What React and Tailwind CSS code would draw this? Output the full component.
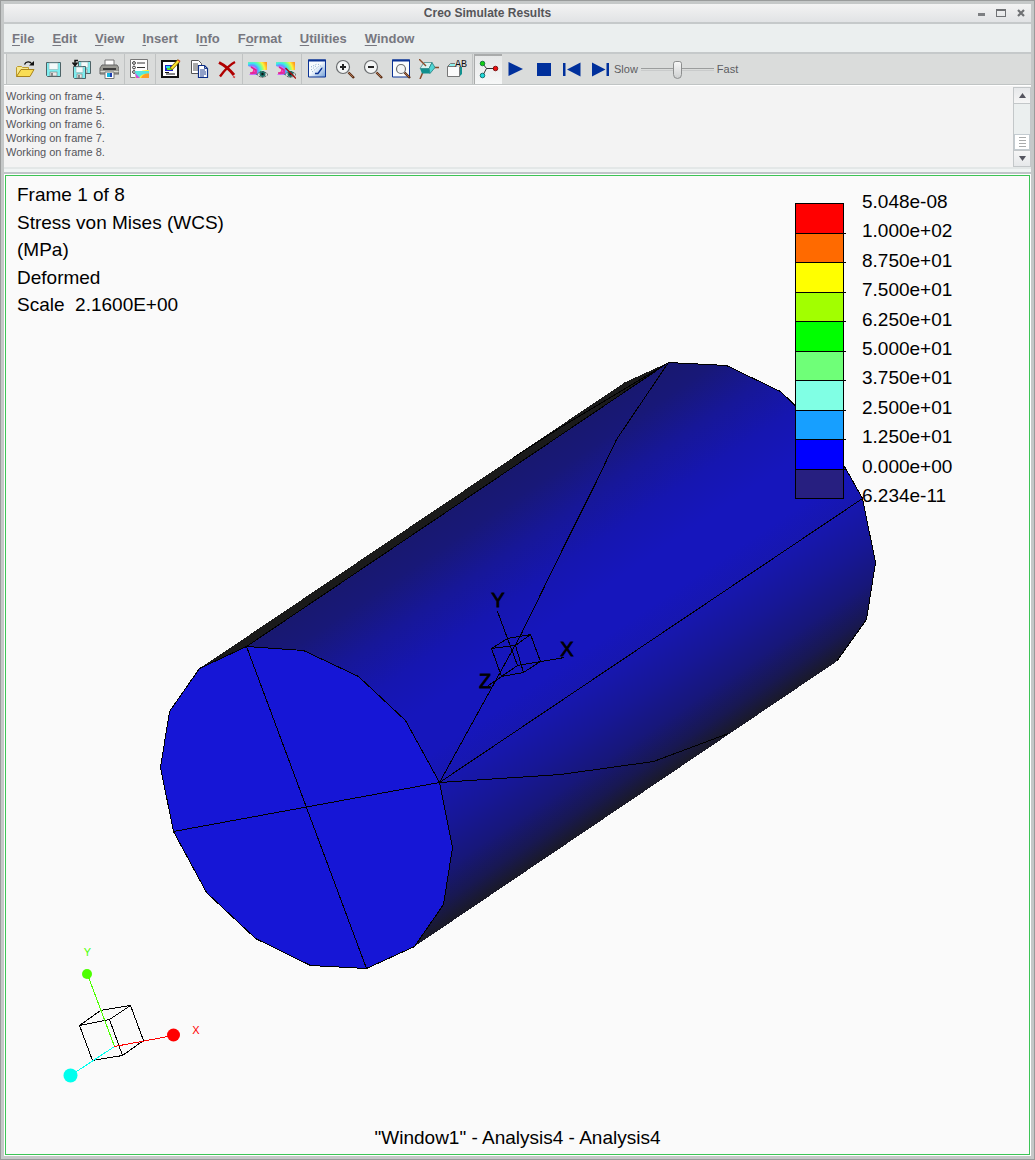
import React, { useState } from 'react';

const MENUS = [
  ['', 'F', 'ile'],
  ['', 'E', 'dit'],
  ['', 'V', 'iew'],
  ['', 'I', 'nsert'],
  ['I', 'n', 'fo'],
  ['F', 'o', 'rmat'],
  ['', 'U', 'tilities'],
  ['', 'W', 'indow'],
];

const LOG_LINES = [
  'Working on frame 4.',
  'Working on frame 5.',
  'Working on frame 6.',
  'Working on frame 7.',
  'Working on frame 8.',
];

const INFO_LINES = [
  'Frame 1 of 8',
  'Stress von Mises (WCS)',
  '(MPa)',
  'Deformed',
  'Scale  2.1600E+00',
];

const LEGEND_COLORS = [
  'bg-[#ff0000]',
  'bg-[#ff6a00]',
  'bg-[#ffff00]',
  'bg-[#a2ff00]',
  'bg-[#00ff00]',
  'bg-[#6fff78]',
  'bg-[#80ffe4]',
  'bg-[#179fff]',
  'bg-[#0000ff]',
  'bg-[#271f80]',
];

const LEGEND_LABELS = [
  '5.048e-08',
  '1.000e+02',
  '8.750e+01',
  '7.500e+01',
  '6.250e+01',
  '5.000e+01',
  '3.750e+01',
  '2.500e+01',
  '1.250e+01',
  '0.000e+00',
  '6.234e-11',
];

function Icon({ children }) {
  return (
    <svg width="20" height="20" viewBox="0 0 20 20" fill="none" aria-hidden="true">
      {children}
    </svg>
  );
}

function Floppy({ x, y, s = 15 }) {
  return (
    <g transform={`translate(${x} ${y})`}>
      <path d={`M.5.5h${s - 1}v${s - 1}h-${s - 2}l-1-1z`} fill="#7feef0" stroke="#4d6266" />
      <rect x="3" y="1" width={s - 6} height={s / 2 - 1} fill="#f4fafa" stroke="#8fb3b5" strokeWidth=".6" />
      <rect x="4" y={s - 5} width={s - 8} height="4" fill="#e8e8e8" stroke="#777" strokeWidth=".6" />
      <rect x="5" y={s - 4} width="2" height="3" fill="#888" />
    </g>
  );
}

// colour fringe used by the show and hide icons
function Fringe({ id }) {
  return (
    <>
      <defs>
        <radialGradient id={id} gradientUnits="userSpaceOnUse" cx="4" cy="12" r="16">
          <stop offset="0.1" stopColor="#ff2aa0" />
          <stop offset="0.25" stopColor="#d070ff" />
          <stop offset="0.36" stopColor="#6a90ff" />
          <stop offset="0.48" stopColor="#38e8f0" />
          <stop offset="0.64" stopColor="#7dff90" />
          <stop offset="0.8" stopColor="#fff23a" />
          <stop offset="1" stopColor="#ff9b20" />
        </radialGradient>
      </defs>
      <path d="M0 3H19V11H14L10 16H1L5 12V9L0 7Z" fill={`url(#${id})`} />
      <path d="M2 14h5M3 8l5 3v4" stroke="#e0208c" strokeWidth="1.5" />
    </>
  );
}

function Eye() {
  return (
    <>
      <path d="M9 15.500Q14 9.500 20 15.500Q14 21 9 15.500Z" fill="#dfe6e4" stroke="#444" strokeDasharray="2 1" />
      <circle cx="14.500" cy="15" r="3" fill="#1c6f68" />
      <circle cx="14.500" cy="15" r="1.200" fill="#0a1515" />
    </>
  );
}

function Lens({ cx, cy, r }) {
  return (
    <>
      <path d={`M${cx + r - 1} ${cy + r - 1}L19 19`} stroke="#5b2f17" strokeWidth="2.400" />
      <path d={`M${cx + r - 1} ${cy + r - 1}L18 18`} stroke="#c08055" strokeWidth=".8" />
      <circle cx={cx} cy={cy} r={r} fill="#f3f5f5" stroke="#6a6d6f" strokeWidth="1.200" />
    </>
  );
}

const TOOL_GROUPS = [
  [
    {
      name: 'Open',
      icon: (
        <>
          <path d="M1.500 17.500V8.500l1-1h4l1 1h6v3" fill="#f7e98e" stroke="#bd9a2c" />
          <path d="M1.500 17.500L6 10.500H19L15 17.500Z" fill="#f9dd55" stroke="#a8821c" />
          <path d="M9.500 5.500C11 2 15 2 17 5" stroke="#111" strokeWidth="1.300" />
          <path d="M14 6.500h5V2z" fill="#111" />
        </>
      ),
    },
    { name: 'Save', icon: <Floppy x={3} y={3} /> },
    {
      name: 'Save a copy',
      icon: (
        <>
          <Floppy x={7} y={2} s={13} />
          <Floppy x={2} y={7} s={13} />
          <path d="M7 1.500H4v4M1.500 3.500L4 6.500L6.500 3.500" stroke="#111" strokeWidth="1.500" />
        </>
      ),
    },
    {
      name: 'Print',
      icon: (
        <>
          <path d="M6 1h9v8H6z" fill="#fff" stroke="#777" />
          <path d="M3 6h15l2 3v6H1V9z" fill="#9b9b95" stroke="#666" />
          <path d="M4 9h13v2H4z" fill="#3c3c3c" />
          <path d="M1.500 12.500h18" stroke="#d9d9d2" />
          <path d="M6 13h9v6.500H6z" fill="#fff" stroke="#777" />
          <path d="M8 14h3v4H8z" fill="#14b6e0" />
          <path d="M11 14h2v4h-2z" fill="#1d3fb0" />
        </>
      ),
    },
  ],
  [
    {
      name: 'Result definition',
      icon: (
        <>
          <path d="M.5.500h17v18H.5z" fill="#fdfdfd" stroke="#777" />
          <circle cx="4" cy="4" r="1.400" stroke="#333" />
          <circle cx="4" cy="8.500" r="1.400" stroke="#333" />
          <circle cx="4" cy="13" r="1.400" stroke="#333" />
          <path d="M7 4h8M7 8.500h8" stroke="#333" />
          <path d="M5 19Q8 10 19 11V19Z" fill="#fff02e" />
          <path d="M5 12h14v3Q12 14 9 19H6z" fill="#54e6e0" />
          <path d="M11 19Q13 14 19 14.500V19z" fill="#ff9c26" />
          <path d="M5 14l5 5H6z" fill="#d44dd8" />
        </>
      ),
    },
  ],
  [
    {
      name: 'Edit',
      icon: (
        <>
          <path d="M1 2h16v16H1z" fill="#fff" stroke="#111" strokeWidth="2" />
          <path d="M4 6h8v6H4z" fill="#1b22c8" />
          <path d="M5 7h4v2H5z" fill="#27dce8" />
          <path d="M6 9h5v2H6z" fill="#60e020" />
          <path d="M5 15h9M4 13.500h4" stroke="#111" />
          <path d="M10 10L18 1.500" stroke="#7a6200" strokeWidth="3.500" />
          <path d="M10.500 9.500L18 1.500" stroke="#ffe32e" strokeWidth="2" />
          <path d="M17 1l2 1.500" stroke="#e23b2a" strokeWidth="1.500" />
        </>
      ),
    },
    {
      name: 'Copy',
      icon: (
        <>
          <path d="M2.500 1.500h7l3 3v10h-10z" fill="#fff" stroke="#555" />
          <path d="M4 5h5M4 7h6M4 9h6M4 11h6" stroke="#555" />
          <path d="M9.500 6.500h6l3 3v9h-9z" fill="#fff" stroke="#0a2c86" strokeWidth="1.200" />
          <path d="M15.500 6.500v3h3M11 11h5M11 13h6M11 15h6M11 17h4" stroke="#23408f" />
        </>
      ),
    },
    {
      name: 'Delete',
      icon: (
        <>
          <path d="M2 3.500C7 6 13 11 17 16" stroke="#b00000" strokeWidth="3" />
          <path d="M18 3C12 6 7 12 3 17.500" stroke="#b00000" strokeWidth="2.400" />
          <path d="M16 17.500l2 1" stroke="#d64040" strokeWidth="1.500" />
        </>
      ),
    },
  ],
  [
    {
      name: 'Show',
      icon: (
        <>
          <Fringe id="fringe-show" />
          <Eye />
        </>
      ),
    },
    {
      name: 'Hide',
      icon: (
        <>
          <Fringe id="fringe-hide" />
          <Eye />
          <path d="M9.500 9L20 19.500" stroke="#a50d0d" strokeWidth="1.400" />
        </>
      ),
    },
  ],
  [
    {
      name: 'Repaint',
      icon: (
        <>
          <defs>
            <linearGradient id="paint" x1="0" y1="0" x2="1" y2="1">
              <stop offset="0.45" stopColor="#f7fbff" />
              <stop offset="1" stopColor="#6d9bd4" />
            </linearGradient>
          </defs>
          <path d="M1.500 1h17v17h-17z" fill="url(#paint)" stroke="#0a3295" />
          <path d="M1 1.500h18" stroke="#0a3295" strokeWidth="2" />
          <path d="M4 11l5-4M5 13l7-6M4 8l6-3M11 5l5 4" stroke="#7c9fc4" strokeDasharray="1 1.500" />
          <path d="M8 14.500h3l4-5.500" stroke="#0a3295" strokeWidth="1.300" />
        </>
      ),
    },
    {
      name: 'Zoom in',
      icon: (
        <>
          <Lens cx={8} cy={8} r={6.5} />
          <path d="M5 8h6M8 5v6" stroke="#222" strokeWidth="2" />
        </>
      ),
    },
    {
      name: 'Zoom out',
      icon: (
        <>
          <Lens cx={8} cy={8} r={6.5} />
          <path d="M5 8h6" stroke="#222" strokeWidth="2" />
        </>
      ),
    },
    {
      name: 'Refit',
      icon: (
        <>
          <path d="M1.500 1h17v17h-17z" fill="#fafcfc" stroke="#0a3295" />
          <path d="M1 1.500h18" stroke="#0a3295" strokeWidth="2" />
          <Lens cx={10} cy={10} r={4.5} />
        </>
      ),
    },
    {
      name: 'Reorient',
      icon: (
        <>
          <path d="M4 13L1 20M15 8.500h5" stroke="#8a4a28" strokeWidth="1.500" />
          <path d="M5 3.500h8l-3 6H1z" fill="#d9f4f2" stroke="#4a8c8a" strokeWidth=".8" />
          <path d="M13 3.500l3 5-5 6-1-5z" fill="#4fd6d6" stroke="#2b8080" strokeWidth=".8" />
          <path d="M1 9.500h9l1 5H3z" fill="#12908e" />
          <path d="M0 0l7 7" stroke="#8a4a28" strokeWidth="1.400" />
        </>
      ),
    },
    {
      name: 'Annotations',
      icon: (
        <>
          <path d="M1 7l3-3h11l-3 3z" fill="#8ff0ee" />
          <path d="M12 7l3-3v11l-3 3z" fill="#13918f" />
          <path d="M.5 7.500h12v10H.5z" fill="#fbfbfb" stroke="#777" />
          <path d="M.5 7.500l3-3h5" stroke="#777" />
          <rect x="8" y="0" width="12" height="8" fill="#dadcdb" />
          <text x="8" y="8" fontSize="10" fontFamily="Liberation Mono, monospace" fill="#111">
            AB
          </text>
        </>
      ),
    },
  ],
  [
    {
      name: 'Spin center',
      pressed: true,
      icon: (
        <>
          <path d="M4 4l3.500 4.500L4 15M7.500 8.500H15" stroke="#333" />
          <circle cx="3.500" cy="3.500" r="2.300" fill="#12cf12" stroke="#063" strokeWidth=".8" />
          <circle cx="16.500" cy="8.500" r="2.300" fill="#ee1010" stroke="#600" strokeWidth=".8" />
          <circle cx="3.500" cy="15.500" r="2.300" fill="#1fd9d9" stroke="#055" strokeWidth=".8" />
        </>
      ),
    },
    { name: 'Play', icon: <path d="M2.500 3L17 10L2.500 17Z" fill="#00309c" /> },
    { name: 'Stop', icon: <path d="M3 4h14v13H3z" fill="#00309c" /> },
    {
      name: 'Previous frame',
      icon: <path d="M1 4h2.500v13H1zM18.500 3.500v14L5 10.500z" fill="#00309c" />,
    },
    {
      name: 'Next frame',
      icon: <path d="M16.500 4H19v13h-2.500zM2 3.500v14l13.500-7z" fill="#00309c" />,
    },
  ],
];

function TitleBar() {
  const btn = 'flex h-[18px] w-5 items-center justify-center';
  return (
    <header className="flex h-5 items-center border-b-2 border-[#c5c9ca] bg-linear-to-b from-[#f3f3f3] to-[#e1e3e5]">
      <h1 className="flex-1 text-center text-xs leading-[18px] font-bold text-[#555559]">
        Creo Simulate Results
      </h1>
      <button type="button" aria-label="Minimize" className={btn}>
        <span className="mt-[3px] h-[3px] w-[7px] bg-[#7d7f82]" />
      </button>
      <button type="button" aria-label="Maximize" className={btn}>
        <span className="h-2 w-2.5 border border-t-2 border-[#6f7174]" />
      </button>
      <button type="button" aria-label="Close" className={btn}>
        <svg width="8" height="8" viewBox="0 0 8 8" aria-hidden="true">
          <path d="M1 1l6 6M7 1L1 7" stroke="#6f7174" strokeWidth="2.200" />
        </svg>
      </button>
    </header>
  );
}

function MenuBar() {
  return (
    <nav className="flex h-[30px] items-center gap-[18px] border-b-2 border-[#c5c9ca] bg-[#ebefef] pt-0.5 pl-2 text-[13px] font-bold text-[#77777f]">
      {MENUS.map(([before, key, after]) => (
        <button key={before + key + after} type="button">
          {before}
          <span className="underline underline-offset-2">{key}</span>
          {after}
        </button>
      ))}
    </nav>
  );
}

function Toolbar() {
  const [speed, setSpeed] = useState(5);
  return (
    <div className="flex h-[31px] items-stretch border-b border-[#c0c4c4] bg-[#dadcdb]">
      <div className="mr-1 w-[3px] border-r border-[#bfc2c2] bg-[#eceeee]" />
      {TOOL_GROUPS.map((group, i) => (
        <div key={i} className="flex">
          {i > 0 && <div className="mx-px w-px bg-[#c0c3c3]" />}
          {group.map((tool) => (
            <button
              key={tool.name}
              type="button"
              aria-label={tool.name}
              className={`flex w-7 items-center justify-center ${
                tool.pressed ? 'border-t-2 border-l border-[#a9abab] bg-linear-to-b from-[#e6e8e8] to-[#f6f7f7]' : ''
              }`}
            >
              <Icon>{tool.icon}</Icon>
            </button>
          ))}
        </div>
      ))}
      <div className="flex items-center gap-[3px] text-[11px] text-[#5c5c62]">
        <label htmlFor="speed">Slow</label>
        <input
          id="speed"
          type="range"
          min="0"
          max="10"
          value={speed}
          onChange={(e) => setSpeed(Number(e.target.value))}
          className="h-5 w-[73px] appearance-none bg-transparent [&::-webkit-slider-runnable-track]:h-[3px] [&::-webkit-slider-runnable-track]:border-y [&::-webkit-slider-runnable-track]:border-t-[#9b9d9d] [&::-webkit-slider-runnable-track]:border-b-[#c9cbcb] [&::-webkit-slider-thumb]:-mt-2 [&::-webkit-slider-thumb]:h-[18px] [&::-webkit-slider-thumb]:w-[9px] [&::-webkit-slider-thumb]:appearance-none [&::-webkit-slider-thumb]:rounded-t-[3px] [&::-webkit-slider-thumb]:rounded-b-[5px] [&::-webkit-slider-thumb]:border [&::-webkit-slider-thumb]:border-[#8c8e8e] [&::-webkit-slider-thumb]:bg-linear-to-b [&::-webkit-slider-thumb]:from-[#f7f7f7] [&::-webkit-slider-thumb]:to-[#cfd1d1]"
        />
        <span>Fast</span>
      </div>
    </div>
  );
}

function ScrollBar() {
  return (
    <div className="mt-[1px] flex w-[18px] flex-col border border-[#c3c7c9] bg-[#ebefef]">
      <button
        type="button"
        aria-label="Scroll up"
        className="flex h-4 items-center justify-center border-b border-[#c3c7c9] bg-linear-to-b from-[#e6e8ea] to-[#f6f6f6]"
      >
        <svg width="7" height="5" viewBox="0 0 7 5" aria-hidden="true">
          <path d="M0 5L3.500 0L7 5Z" fill="#55555f" />
        </svg>
      </button>
      <div className="flex flex-1 flex-col justify-end">
        <div className="flex h-4 flex-col items-center justify-center gap-0.5 border border-[#c3cbd0] bg-white">
          <span className="h-px w-[7px] bg-[#a9abab]" />
          <span className="h-px w-[7px] bg-[#a9abab]" />
          <span className="h-px w-[7px] bg-[#a9abab]" />
          <span className="h-px w-[7px] bg-[#a9abab]" />
        </div>
      </div>
      <button
        type="button"
        aria-label="Scroll down"
        className="flex h-4 items-center justify-center border-t border-[#c3c7c9] bg-linear-to-b from-[#f6f6f6] to-[#e6e8ea]"
      >
        <svg width="7" height="5" viewBox="0 0 7 5" aria-hidden="true">
          <path d="M0 0L3.500 5L7 0Z" fill="#55555f" />
        </svg>
      </button>
    </div>
  );
}

function MessageLog() {
  return (
    <div className="flex h-[82px] border-t border-white bg-[#f3f3f3]">
      <div className="flex-1 py-[3px] pl-0.5 text-[11px] leading-[14px] text-[#55555b]">
        {LOG_LINES.map((line) => (
          <p key={line}>{line}</p>
        ))}
      </div>
      <ScrollBar />
    </div>
  );
}

function Model() {
  return (
    <svg viewBox="6 176 1023 978" className="col-start-1 row-start-1 block h-auto w-full" role="img" aria-label="Stress model">
      <defs>
        {/* runs across the cylinder, perpendicular to its axis */}
        <linearGradient id="body" gradientUnits="userSpaceOnUse" x1="246" y1="646" x2="437.500" y2="930.500">
          <stop offset="0" stopColor="#181870" />
          <stop offset="0.08" stopColor="#181878" />
          <stop offset="0.2" stopColor="#171798" />
          <stop offset="0.32" stopColor="#1616b0" />
          <stop offset="0.44" stopColor="#1616bc" />
          <stop offset="0.56" stopColor="#1616bc" />
          <stop offset="0.66" stopColor="#1717ac" />
          <stop offset="0.76" stopColor="#171796" />
          <stop offset="0.86" stopColor="#17177a" />
          <stop offset="0.94" stopColor="#181852" />
          <stop offset="1" stopColor="#1a1a26" />
        </linearGradient>
      </defs>
      <g
        transform="translate(.5 .5)"
        stroke="#000"
        strokeWidth="1"
        strokeLinejoin="round"
        fill="none"
        shapeRendering="crispEdges"
      >
        <polygon
          points="246,646 668,362 726,365 780,391 827,436 844,466 862,498 875,562 866,619 836,661 414,946"
          fill="url(#body)"
          stroke="none"
        />
        <polyline points="668,362 726,365 780,391 827,436 844,466 862,498 875,562 866,619 836,661" />
        <polygon points="199,668 624,382 668,362 246,646" fill="#1a1a1a" stroke="none" />
        <path d="M246 646L668 362L560 427L513 457" />
        <polygon
          points="246,646 303,650 358,676 405,720 439,782 452,847 443,904 414,946 366,968 310,965 255,938 206,892 173,831 160,767 169,711 199,668"
          fill="#1616d6"
        />
        <path d="M246 646L366 968M173 831L439 782" />
        <path d="M668 362L616 439L595 483L565 543L520 635L439 782" />
        <path d="M439 782L862 498" />
        <path d="M439 782L560 774L653 761L728 733" />
        {/* model coordinate system */}
        <path d="M491 648L507 638L530 634L515 645ZM491 648L501 676L523 672L515 645M523 672L540 661L530 634M540 661L517 665L501 676" />
        <path d="M517 665L497 611M517 665L564 657M517 665L488 685" />
      </g>
      <g fontFamily="Liberation Sans, Arial, sans-serif" fontSize="20" stroke="#000" strokeWidth=".8" textAnchor="middle">
        <text x="498" y="607">Y</text>
        <text x="567" y="656">X</text>
        <text x="485" y="688">Z</text>
      </g>
      {/* view orientation triad */}
      <g transform="translate(.5 .5)" fill="none" strokeWidth="1" shapeRendering="crispEdges">
        <path d="M79 1025L100 1010L130 1005L109 1019ZM79 1025L92 1060L122 1055L109 1019M122 1055L143 1040L130 1005" stroke="#000" />
        <path d="M114 1046L87 974" stroke="#4cff00" />
        <path d="M114 1046L173 1035" stroke="#ff0000" />
        <path d="M114 1046L70 1075" stroke="#00ffee" />
      </g>
      <circle cx="87" cy="974" r="5" fill="#4cff00" />
      <circle cx="173.500" cy="1035" r="6.500" fill="#ff0000" />
      <circle cx="70.500" cy="1075.500" r="7" fill="#00ffee" />
      <g fontFamily="Liberation Sans, Arial, sans-serif" fontSize="11" textAnchor="middle">
        <text x="87.500" y="956" fill="#4cff00">Y</text>
        <text x="196" y="1034" fill="#ff0000">X</text>
      </g>
    </svg>
  );
}

function Legend() {
  return (
    <div className="flex w-[234px] gap-[18px] pt-[15px]">
      <div className="mt-3 flex h-[296px] w-[49px] flex-col border border-black">
        {LEGEND_COLORS.map((color) => (
          <div
            key={color}
            className={`relative flex-1 border-b border-black last:border-b-0 after:absolute after:-right-[3px] after:-bottom-px after:h-px after:w-[3px] after:bg-black last:after:hidden ${color}`}
          />
        ))}
      </div>
      <div className="flex h-[316px] flex-col justify-between leading-[22px]">
        {LEGEND_LABELS.map((label) => (
          <span key={label}>{label}</span>
        ))}
      </div>
    </div>
  );
}

function Viewport() {
  return (
    <main className="bg-white p-px">
      <div className="grid border border-[#3cc455] bg-[#fafafa]">
        <Model />
        <div className="relative col-start-1 row-start-1 flex flex-col justify-between text-[19px] text-black">
          <div className="flex justify-between">
            <div className="flex h-[140px] flex-col justify-between pt-2 pl-[11px] leading-[22px] whitespace-pre">
              {INFO_LINES.map((line) => (
                <p key={line}>{line}</p>
              ))}
            </div>
            <Legend />
          </div>
          <p className="pb-[5px] text-center leading-[22px]">&quot;Window1&quot; - Analysis4 - Analysis4</p>
        </div>
      </div>
    </main>
  );
}

export default function App() {
  return (
    <div className="border border-[#999b9b] bg-[#c5c8c8] p-[3px] font-['Liberation_Sans',Arial,sans-serif]">
      <TitleBar />
      <MenuBar />
      <Toolbar />
      <MessageLog />
      <div className="h-[7px] border-y-2 border-t-[#e3e7e7] border-b-[#c0c5c8] bg-[#f0f4f4]" />
      <Viewport />
    </div>
  );
}
